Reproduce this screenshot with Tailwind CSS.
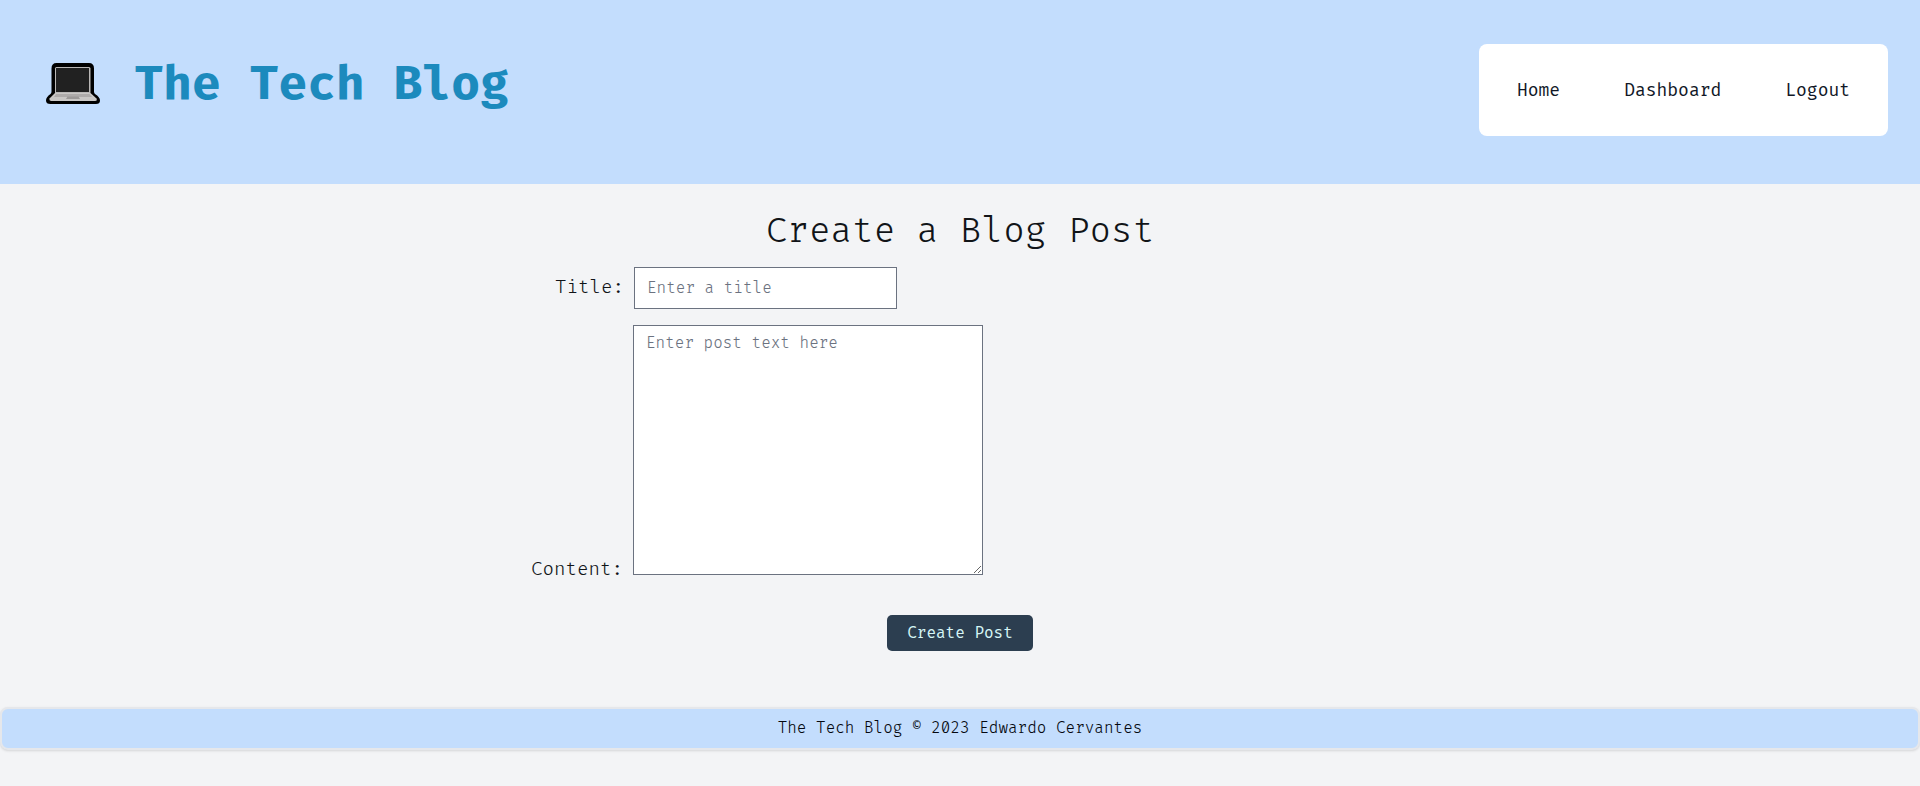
<!DOCTYPE html>
<html lang="en">
<head>
<meta charset="utf-8">
<title>The Tech Blog</title>
<script src="https://cdn.jsdelivr.net/npm/@tailwindcss/browser@4"></script>
</head>
<body class="min-h-screen overflow-hidden bg-[#f3f4f6] font-['Fira_Code','Liberation_Mono',monospace] font-[350] text-[#111418]">
<header class="flex h-[184px] items-start justify-between bg-[#c3ddfd] pt-[44px] pr-8 pl-[46px]">
  <h1 class="flex items-start text-[46.8px] font-bold text-[#1c8abd]">
    <svg class="mt-[19px] mr-[34.5px] h-[41px] w-[54px]" viewBox="0 0 54 41" aria-label="laptop">
      <path d="M10.500 0H43Q48 0 48 5.500V28.500Q48 30 49 31Q54 34 54 37.500Q54 41 50 41H4.500Q0 41 0 37.500Q0 34 4.500 31Q5.500 30 5.500 28.500V5.500Q5.500 0 10.500 0Z" fill="#000"/>
      <path d="M9 5.500Q9 4 10.500 4H43Q44.500 4 44.500 5.500V30H9Z" fill="#b9b7b6"/>
      <path d="M10 5H43V29H10Z" fill="#212121"/>
      <path d="M9 30H44.500L50.500 35.500Q51.500 38 49 38H5.500Q3 38 3.500 35.500Z" fill="#c9c7c5"/>
      <path d="M10 31H43.500L46 34H8Z" fill="#aeabaa"/>
      <path d="M21.500 33.500H32.500L34 36H20Z" fill="#9c9998"/>
    </svg>
    <span class="pt-[18px] leading-none">The Tech Blog</span>
  </h1>
  <nav class="flex h-[92px] w-[409px] items-center justify-center gap-16 rounded-lg bg-white pt-[2px] text-[17.55px] font-normal text-[#111827]">
    <a>Home</a><a>Dashboard</a><a>Logout</a>
  </nav>
</header>
<main class="flex h-[523px] flex-col items-center pt-[27px]">
  <h2 class="text-[35.1px] leading-[42px]">Create a Blog Post</h2>
  <form class="flex w-[862px] flex-col">
    <div class="mt-[14px] flex items-start">
      <label class="w-[105px] pt-[9px] pr-[10px] text-right text-[18.72px] leading-6 whitespace-nowrap">Title:</label>
      <input class="h-[42px] w-[263px] border border-[#6b7280] bg-white px-3 text-[15.6px] outline-none placeholder:text-[#6b7280]" placeholder="Enter a title">
    </div>
    <div class="mt-4 flex items-end">
      <label class="-mb-px w-[104px] pr-[10px] text-right text-[18.72px] leading-3 whitespace-nowrap">Content:</label>
      <textarea class="h-[250px] w-[350px] border border-[#6b7280] bg-white px-3 py-[6px] text-[15.6px] leading-6 outline-none placeholder:text-[#6b7280]" placeholder="Enter post text here"></textarea>
    </div>
    <button type="button" class="mt-10 h-9 w-[146px] self-center rounded-[5px] bg-[#2c3e50] pt-[2px] text-[15.6px] font-normal text-[#d5f5f6]">Create Post</button>
  </form>
</main>
<footer class="flex h-[43px] items-center justify-center rounded-lg border-2 border-[#e5e7eb] bg-[#c3ddfd] pt-px text-[15.6px] text-[#05080f] shadow-sm"><p>The Tech Blog <span class="inline-block w-[9.6px] text-center align-[2px] text-[14px] leading-none">©</span> 2023 Edwardo Cervantes</p></footer>
</body>
</html>
